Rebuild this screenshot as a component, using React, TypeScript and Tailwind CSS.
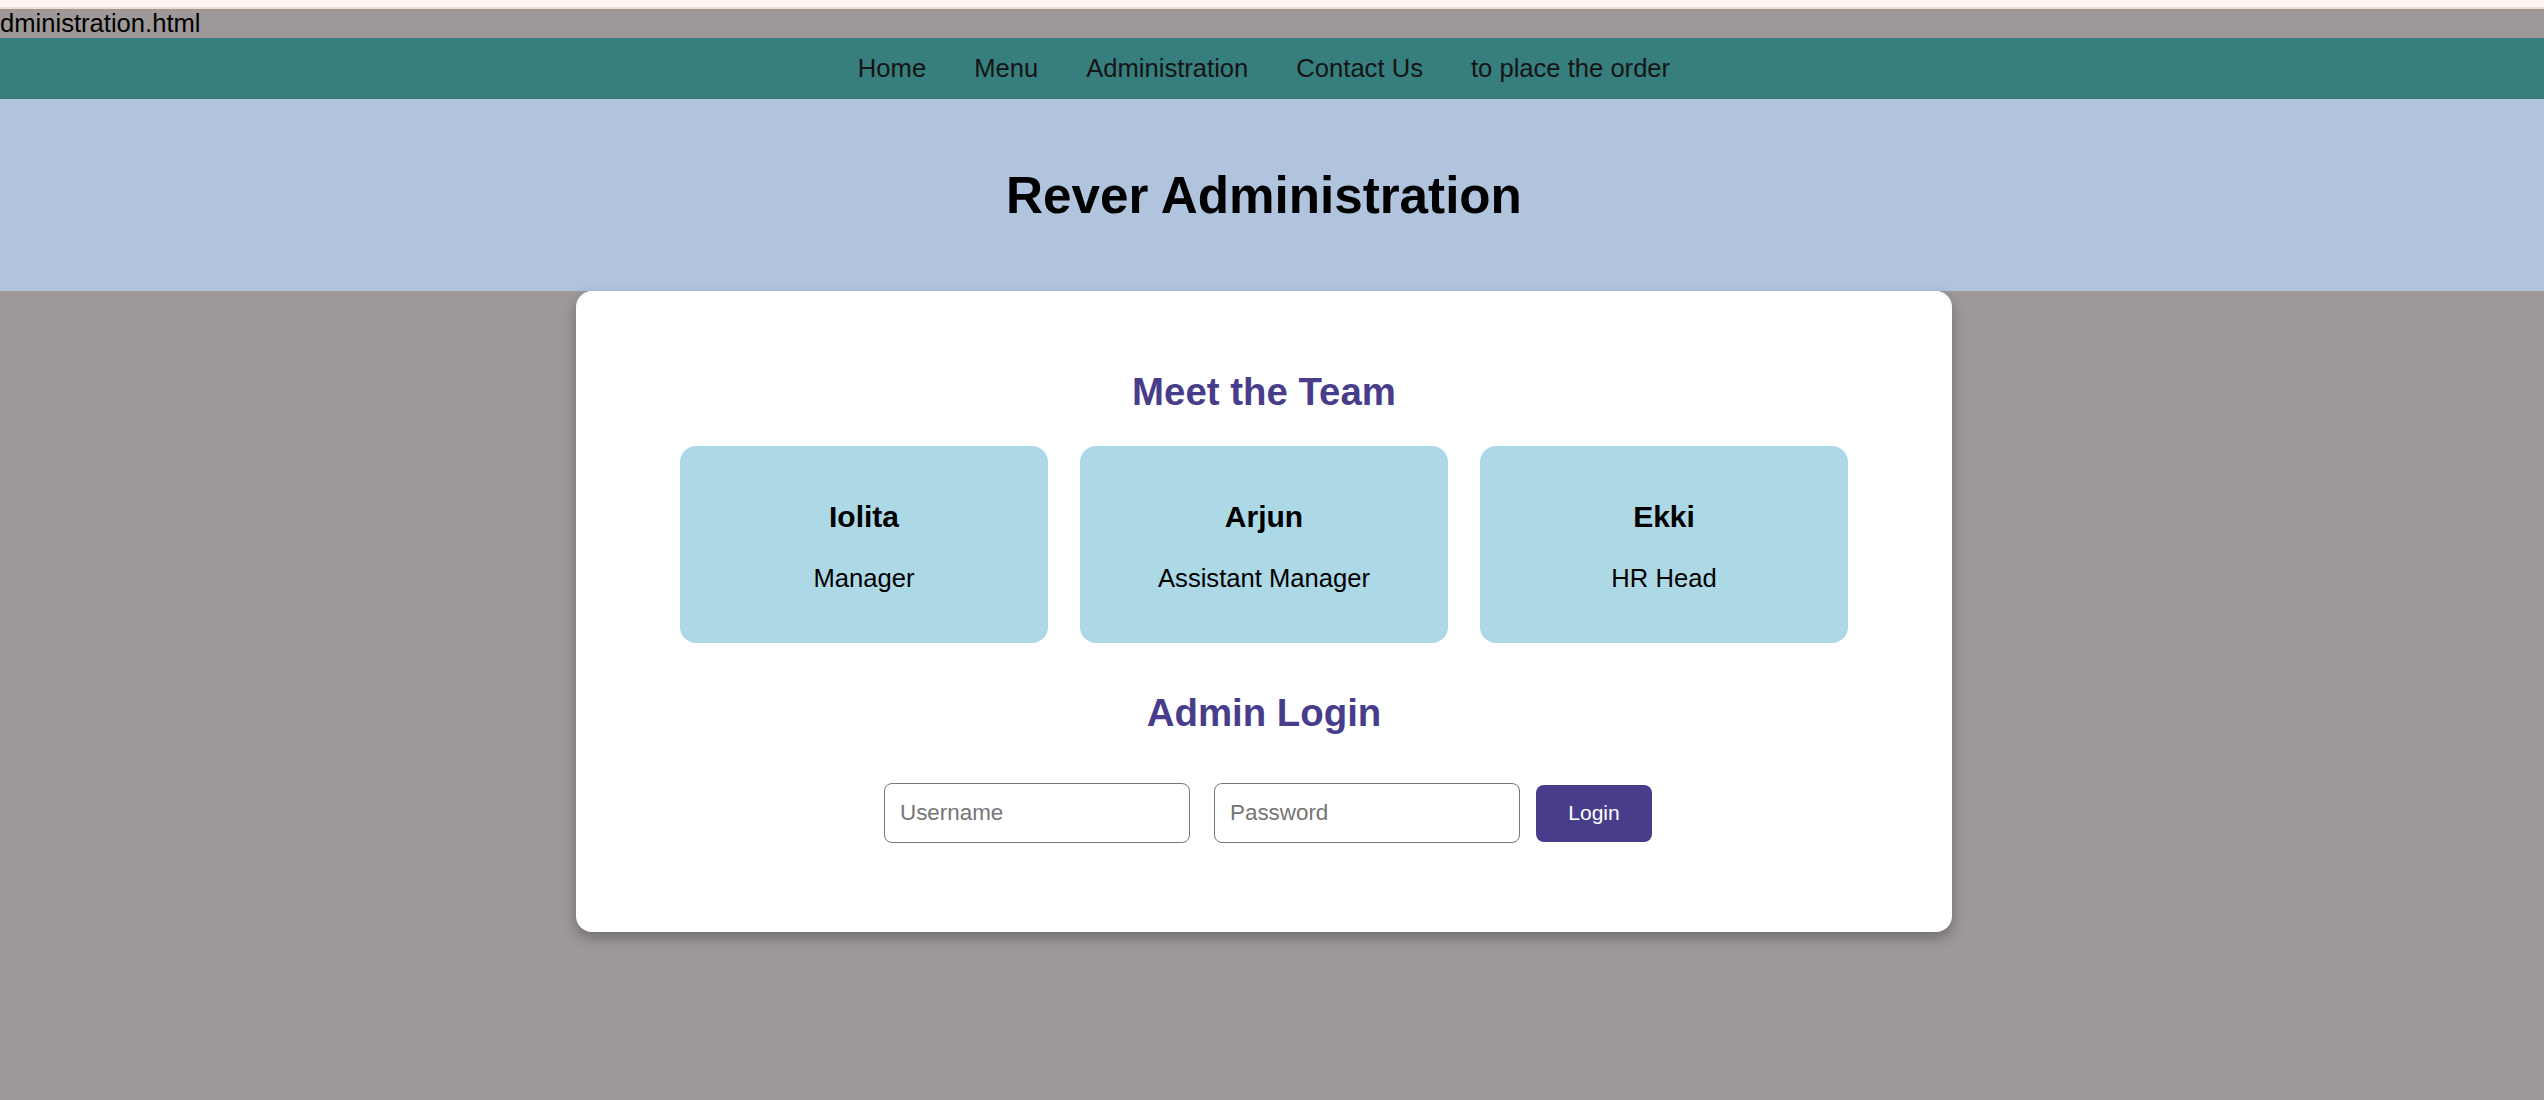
import React from 'react';

const navLinks = ['Home', 'Menu', 'Administration', 'Contact Us', 'to place the order'];

const team = [
  { name: 'Iolita', role: 'Manager' },
  { name: 'Arjun', role: 'Assistant Manager' },
  { name: 'Ekki', role: 'HR Head' },
];

const TeamCard = ({ name, role }: { name: string; role: string }) => (
  <div className="w-[368px] bg-[#add8e6] rounded-[16px] pt-[54px] pb-[50px] text-center text-black">
    <h3 className="text-[30px] leading-[34px] font-bold mb-[30px]">{name}</h3>
    <p className="text-[25.6px] leading-[29px]">{role}</p>
  </div>
);

export default function App() {
  return (
    <div className="min-h-screen bg-[#9e9898] font-['Liberation_Sans',Arial,sans-serif]">
      <div className="h-[7px] bg-[#fff5ef]" />
      <div className="h-[2px] bg-[#f1ded2]" />
      <div className="text-[25.6px] leading-[29px] text-black whitespace-nowrap">dministration.html</div>

      <nav className="h-[61px] bg-[#367f7e] flex items-center justify-center gap-[48px] pr-[16px]">
        {navLinks.map((link) => (
          <a key={link} href="#" className="text-[25.6px] leading-[29px] text-[#141414]">
            {link}
          </a>
        ))}
      </nav>

      <header className="h-[192px] bg-[#b0c4de] flex items-center justify-center pr-[16px]">
        <h1 className="text-[51.2px] leading-[59px] font-bold text-black">Rever Administration</h1>
      </header>

      <div className="flex justify-center pr-[16px]">
        <main className="w-[1376px] bg-white rounded-[16px] shadow-[0_6px_14px_rgba(0,0,0,0.28)] pt-[48px] pb-[89px]">
          <h2 className="mt-[31px] text-center text-[38.4px] leading-[44px] font-bold text-[#483d8b]">Meet the Team</h2>
          <div className="mt-[32px] flex justify-center gap-[32px]">
            {team.map((m) => (
              <TeamCard key={m.name} name={m.name} role={m.role} />
            ))}
          </div>

          <h2 className="mt-[48px] text-center text-[38.4px] leading-[44px] font-bold text-[#483d8b]">Admin Login</h2>
          <form className="mt-[48px] flex items-center justify-center pl-[8px]" onSubmit={(e) => e.preventDefault()}>
            <input
              type="text"
              placeholder="Username"
              className="w-[306px] h-[60px] border-[1.5px] border-[#767676] rounded-[8px] pl-[15px] text-[22.4px] placeholder:text-[#757575] outline-none"
            />
            <input
              type="password"
              placeholder="Password"
              className="ml-[24px] w-[306px] h-[60px] border-[1.5px] border-[#767676] rounded-[8px] pl-[15px] text-[22.4px] placeholder:text-[#757575] outline-none"
            />
            <button type="submit" className="ml-[16px] w-[116px] h-[57px] bg-[#483d8b] text-white text-[21px] rounded-[8px]">
              Login
            </button>
          </form>
        </main>
      </div>
    </div>
  );
}
